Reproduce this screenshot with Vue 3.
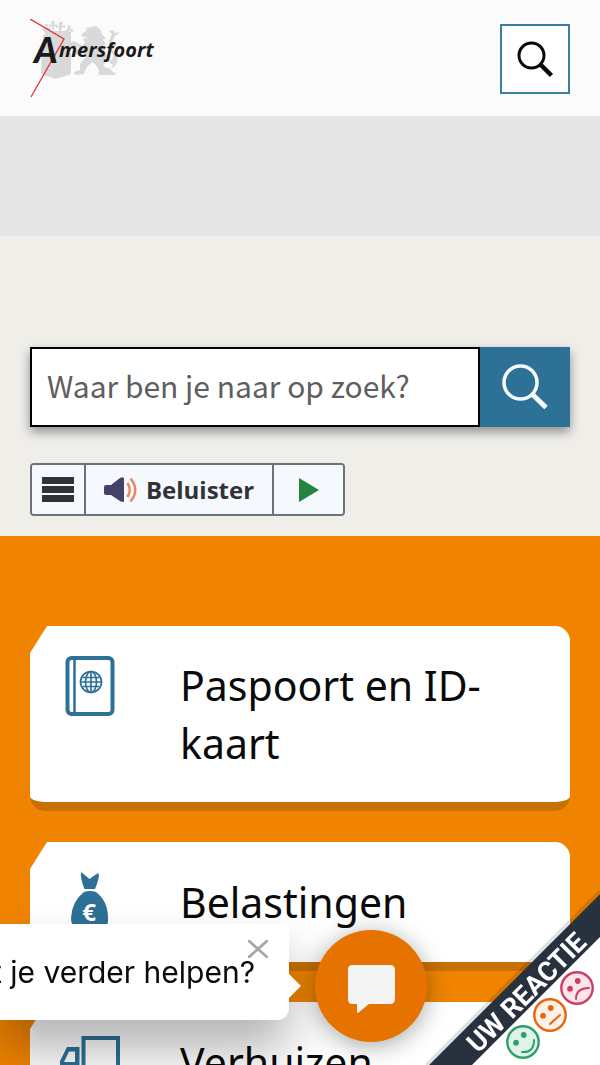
<script setup>
const cards = [
  { title: 'Paspoort en ID-kaart', icon: 'passport' },
  { title: 'Belastingen', icon: 'money' },
  { title: 'Verhuizen', icon: 'truck' },
]
</script>

<template>
  <div class="page">
    <header class="header">
      <a href="#" class="logo" aria-label="Amersfoort">
        <svg width="126" height="80" viewBox="0 0 126 80">
          <g fill="#d9d9d9">
            <path d="M13 16 L18 13 41 13 V54 Q40 56 36 57 Q28 59 25 60 Q22 58 15 57 Q11 56 11 52 Z" />
            <path d="M12 9 h4 l-1 -4 h3 l-1 4 4 -1 -1 4 h3 l-1 -5 -3 1 v-3 l3 1 -1 -4 h4 l-1 4 3 -1 v3 l-3 -1 0 5 h5 l0 -4 -3 1 v-3 l3 1 0 -4 h4 l-1 4 3 -1 v3 l-3 -1 -1 4 4 0 3 -3 -1 -2 3 -1 1 4 3 1 -2 2 -3 -1 -4 6 H17 Z" />
            <path d="M53 14 L57 11 56 9 61 8 66 7 70 10 72 15 76 20 73 20 76 26 73 26 75 32 77 37 76 43 73 46 76 49 80 50 79 54 77 55 Q79 52 83 46 L77 42 Q84 42 83 35 Q77 29 79 22 L82 15 79 12 83 11 85 14 90 13 85 17 82 23 88 25 84 28 81 28 Q83 32 86 36 Q90 42 84 48 L76 51 77 53 77 56 71 56 68 55 70 53 66 46 62 43 57 48 55 52 54 55 45 56 44 53 50 51 50 45 53 41 56 38 54 34 50 34 45 37 42 34 46 31 50 29 43 27 39 29 40 24 44 22 53 27 55 23 52 20 58 19 54 18 51 17 Z" />
            <path d="M69 50 L79 49 83 53 86 54 85 56 69 56 Z" />
          </g>
          <path d="M0 0 L34 20 1 78" fill="none" stroke="#e2303a" stroke-width="1.3" />
          <text class="logo-initial" x="4" y="44">A</text>
          <text class="logo-rest" x="29" y="38">mersfoort</text>
        </svg>
      </a>
      <button class="header-search" type="button" aria-label="Zoeken">
        <svg width="38" height="38" viewBox="0 0 38 38" fill="none" stroke="#0a0a0a">
          <circle cx="15.500" cy="15.500" r="12.500" stroke-width="3" />
          <path d="M24 24 L35.500 35.500" stroke-width="4.500" />
        </svg>
      </button>
    </header>

    <div class="banner"></div>

    <section class="search-area">
      <form class="search" role="search" @submit.prevent>
        <input type="text" aria-label="Waar ben je naar op zoek?" placeholder="Waar ben je naar op zoek?" />
        <button type="submit" aria-label="Zoek">
          <svg width="46" height="46" viewBox="0 0 46 46" fill="none" stroke="#f8fbfd">
            <circle cx="18.500" cy="18.500" r="16.500" stroke-width="3.500" />
            <path d="M30 30 L44 43.500" stroke-width="5" />
          </svg>
        </button>
      </form>

      <div class="reader">
        <button class="reader-menu" type="button" aria-label="Menu">
          <svg width="32" height="26" viewBox="0 0 32 26" fill="#303236">
            <path d="M0 0h32v7H0zM0 9h32v7H0zM0 18h32v7H0z" />
          </svg>
        </button>
        <button class="reader-listen" type="button">
          <svg width="34" height="26" viewBox="0 0 34 26">
            <path d="M0 10 Q0 8 2 8 H7 L16 1 Q20 -1 20 2 V24 Q20 26 16 24 L7 18 H2 Q0 18 0 16 Z" fill="#45426a" />
            <path d="M23.500 6 Q28 13 23.500 20 M26.500 1.500 Q36 13 26.500 24.500" fill="none" stroke="#e9855d" stroke-width="2.400" />
          </svg>
          <span>Beluister</span>
        </button>
        <button class="reader-play" type="button" aria-label="Afspelen">
          <svg width="20" height="24" viewBox="0 0 20 24"><path d="M0 0 L20 12 0 24 Z" fill="#23843f" /></svg>
        </button>
      </div>
    </section>

    <main class="tasks">
      <a v-for="card in cards" :key="card.title" href="#" class="card">
        <span class="card-icon">
          <svg v-if="card.icon === 'passport'" width="60" height="60" viewBox="0 0 60 60" fill="none" stroke="#2d7196">
            <rect x="7.500" y="2" width="45" height="56" rx="4" stroke-width="4" />
            <path d="M14.500 3 V57" stroke-width="2.500" />
            <g stroke-width="1.700">
              <circle cx="31" cy="26" r="10.500" />
              <ellipse cx="31" cy="26" rx="5.500" ry="10.500" />
              <path d="M31 15.500 V36.500 M20.500 26 H41.500 M22.500 21.500 H39.500 M22.500 30.500 H39.500" />
            </g>
          </svg>
          <svg v-else-if="card.icon === 'money'" width="60" height="60" viewBox="0 0 60 60">
            <path d="M21 0 Q26 4 29.500 7 Q33 4 38.500 1 Q40 5 35 17 L24.500 17 Q20 6 21 0 Z M24 20 Q30 18 36 20 Q48 29 48 46 Q49 58 36 59 H24 Q11 58 11 46 Q12 29 24 20 Z" fill="#2d7196" />
            <text class="euro" x="29" y="49" text-anchor="middle">€</text>
          </svg>
          <svg v-else width="60" height="60" viewBox="0 0 60 60">
            <path d="M23.500 46 V6 H58 V46 Z" fill="none" stroke="#2d7196" stroke-width="4" />
            <path d="M0 48 V29 L7 15 H19.500 V48 Z M4 30 H15 V19.500 H9 Z" fill="#2d7196" fill-rule="evenodd" />
            <g fill="#fff" stroke="#2d7196" stroke-width="4">
              <circle cx="13" cy="49" r="5" /><circle cx="46" cy="49" r="5" />
            </g>
          </svg>
        </span>
        <span class="card-title">{{ card.title }}</span>
      </a>
    </main>

    <aside class="chat-bubble">
      <button class="chat-close" type="button" aria-label="Sluiten">
        <svg width="20" height="18" viewBox="0 0 20 18"><path d="M1 1 L19 17 M19 1 L1 17" stroke="#a6a6a6" stroke-width="2.800" stroke-linecap="round" /></svg>
      </button>
      <span>t je verder helpen?</span>
      <svg class="chat-tail" width="12" height="24" viewBox="0 0 12 24"><path d="M0 0 L12 12 0 24 Z" fill="#fff" /></svg>
    </aside>
    <button class="chat-button" type="button" aria-label="Chat">
      <svg width="48" height="48" viewBox="0 0 48 48"><path d="M5 0 H43 Q48 0 48 5 V34 Q48 39 43 39 H22 L11 48 Q10 48 10 47 V39 H5 Q1 39 1 34 V5 Q1 0 5 0 Z" fill="#f4f4f4" /></svg>
    </button>

    <a href="#" class="feedback" aria-label="Uw reactie">
      <svg width="180" height="180" viewBox="0 0 180 180">
        <path d="M6 180 L180 6" stroke="#000" stroke-opacity="0.120" stroke-width="3" />
        <path d="M9 180 L180 9 V180 Z" fill="#27323e" />
        <path d="M52 180 L180 52 V180 Z" fill="#fff" />
        <text class="feedback-label" transform="translate(113 114) rotate(-45)" x="0" y="0" text-anchor="middle">UW REACTIE</text>
        <g fill="none" stroke-width="2.400" stroke-linecap="round">
          <g transform="translate(157 103)" stroke="#cf3d62">
            <circle r="15.700" fill="#fce6eb" />
            <path d="M-1 11 Q-1 0 12 0" stroke-width="2" />
            <circle cx="-7" cy="0.700" r="1.700" fill="#cf3d62" /><circle cx="0.700" cy="-7" r="1.700" fill="#cf3d62" />
          </g>
          <g transform="translate(130 130)" stroke="#e8650e">
            <circle r="15.700" fill="#fdf0e6" />
            <path d="M0 9 L10 0" stroke-width="2" />
            <circle cx="-7" cy="0.700" r="1.700" fill="#e8650e" /><circle cx="0.700" cy="-7" r="1.700" fill="#e8650e" />
          </g>
          <g transform="translate(103 157)" stroke="#2f9f69">
            <circle r="15.700" fill="#e0f3ea" />
            <path d="M-1 10 Q11 11 11 -2" stroke-width="2" />
            <circle cx="-7" cy="0.700" r="1.700" fill="#2f9f69" /><circle cx="0.700" cy="-7" r="1.700" fill="#2f9f69" />
          </g>
        </g>
      </svg>
    </a>
  </div>
</template>

<style>
body { margin: 0; }
</style>

<style scoped>
* { box-sizing: border-box; }
button { margin: 0; padding: 0; border: 0; border-radius: 0; cursor: pointer; }
svg { display: block; }
.page {
  display: flex;
  flex-direction: column;
  height: 100vh;
  overflow: hidden;
  background: #f08400;
  font-family: "Noto Sans", sans-serif;
  color: #0a0a0a;
}
.header {
  display: flex;
  flex: none;
  justify-content: space-between;
  align-items: flex-start;
  padding: 24px 30px 22px;
  background: #fbfbfb;
}
.logo { margin: -5px 0; color: #1a1a1a; }
.logo-initial { font: italic 900 36px Lato, sans-serif; fill: #1a1a1a; }
.logo-rest { font: italic 700 20px "Open Sans", sans-serif; fill: #1a1a1a; }
.header-search {
  display: grid;
  place-items: center;
  width: 70px;
  height: 70px;
  border: 2px solid #38809f;
  background: #fff;
}
.banner { flex: none; height: 120px; background: #e6e6e6; }
.search-area { flex: none; padding: 111px 30px 20px; background: #efeee9; }
.search { display: flex; height: 80px; box-shadow: 0 5px 10px rgba(0, 0, 0, 0.4); }
.search input {
  flex: 1;
  min-width: 0;
  padding: 0 15px 4px;
  border: 2px solid #000;
  border-radius: 0;
  background: #fff;
  font: 30px "Noto Sans CJK SC", sans-serif;
  color: #222;
}
.search input::placeholder { color: #5e5e5e; opacity: 1; }
.search button { display: grid; place-items: center; width: 90px; background: #2d7196; }
.reader {
  display: inline-flex;
  height: 53px;
  margin-top: 36px;
  border: 2px solid #6b727d;
  border-radius: 4px;
  background: #f5f8fc;
  overflow: hidden;
  vertical-align: top;
}
.reader button { display: flex; align-items: center; justify-content: center; background: #f5f8fc; }
.reader button + button { border-left: 2px solid #6b727d; }
.reader-menu { width: 52px; }
.reader-listen { gap: 8px; width: 188px; font: 700 24px "Open Sans", sans-serif; color: #303236; }
.reader-play { width: 71px; }
.tasks { display: flex; flex: none; flex-direction: column; gap: 31px; padding: 90px 30px; }
.card {
  display: flex;
  align-items: center;
  padding: 30px;
  border-bottom: 9px solid #c87000;
  border-radius: 15px;
  background: #fff;
  clip-path: polygon(17px 0, 100% 0, 100% 100%, 0 100%, 0 27px);
  color: #0a0a0a;
  text-decoration: none;
}
.card-icon { flex: none; align-self: flex-start; width: 120px; }
.card-title { flex: 1; font-size: 41px; line-height: 58px; }
.euro { font: 700 24px "Noto Sans", sans-serif; fill: #fff; }
.chat-bubble {
  position: fixed;
  bottom: 45px;
  left: 0;
  display: flex;
  align-items: center;
  justify-content: flex-end;
  width: 289px;
  height: 96px;
  padding-right: 34px;
  border-radius: 0 0 12px 0;
  background: #fff;
  box-shadow: 0 30px 50px rgba(0, 0, 0, 0.3);
  font: 30px Inter, sans-serif;
  white-space: nowrap;
}
.chat-close { position: absolute; top: 16px; right: 21px; background: none; }
.chat-tail { position: absolute; left: 100%; top: 50px; }
.chat-button {
  position: fixed;
  bottom: 23px;
  left: 315px;
  display: grid;
  place-items: center;
  width: 112px;
  height: 112px;
  padding-top: 6px;
  border-radius: 50%;
  background: #e67300;
  box-shadow: 0 4px 24px rgba(0, 0, 0, 0.35);
}
.feedback { position: fixed; right: 0; bottom: 0; }
.feedback-label { font: 700 27px Roboto, sans-serif; fill: #fff; }
</style>
